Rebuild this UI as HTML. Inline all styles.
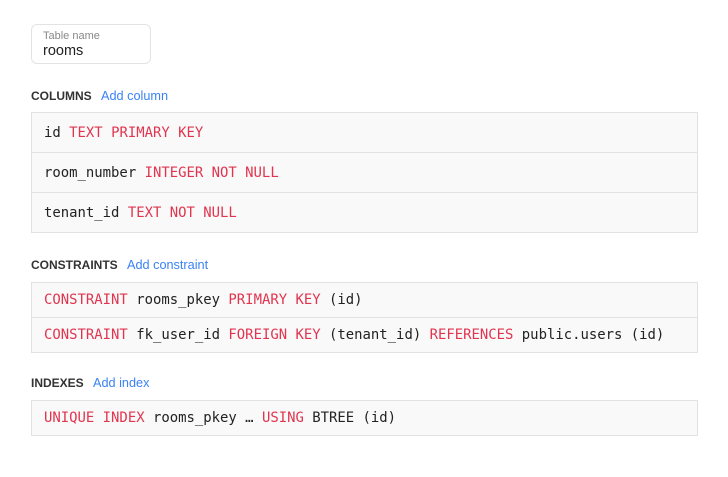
<!DOCTYPE html>
<html><head><style>
body{margin:0;background:#fff;width:728px;height:477px;font-family:"Liberation Sans",sans-serif;position:relative}
.tn{position:absolute;left:31px;top:24px;width:118px;height:38px;border:1px solid #e3e3e3;border-radius:6px;box-sizing:content-box}
.tn .l{position:absolute;left:11px;top:5px;font-size:11px;color:#888}
.tn .v{position:absolute;left:11px;top:18px;font-size:14.5px;color:#222}
.h{position:absolute;left:31px;font-size:12px;font-weight:bold;color:#333}
.h span{font-weight:normal;color:#3b82f6;margin-left:6px;font-size:12.7px}
.box{position:absolute;left:31px;width:665px;border:1px solid #e2e2e2;background:#f9f9f9}
.r{font-family:"DejaVu Sans Mono",monospace;font-size:13.93px;color:#222;padding-left:12px;border-top:1px solid #e2e2e2;white-space:pre}
.r:first-child{border-top:none}
.k{color:#e0344f}
</style></head><body>
<div class="tn"><div class="l">Table name</div><div class="v">rooms</div></div>
<div class="h" style="top:89px">COLUMNS <span>Add column</span></div>
<div class="box" style="top:112px">
<div class="r" style="height:39px;line-height:40px">id <span class="k">TEXT PRIMARY KEY</span></div>
<div class="r" style="height:39px;line-height:40px">room_number <span class="k">INTEGER NOT NULL</span></div>
<div class="r" style="height:39px;line-height:40px">tenant_id <span class="k">TEXT NOT NULL</span></div>
</div>
<div class="h" style="top:258px">CONSTRAINTS <span>Add constraint</span></div>
<div class="box" style="top:282px">
<div class="r" style="height:34px;line-height:34px"><span class="k">CONSTRAINT</span> rooms_pkey <span class="k">PRIMARY KEY</span> (id)</div>
<div class="r" style="height:34px;line-height:34px"><span class="k">CONSTRAINT</span> fk_user_id <span class="k">FOREIGN KEY</span> (tenant_id) <span class="k">REFERENCES</span> public.users (id)</div>
</div>
<div class="h" style="top:376px">INDEXES <span>Add index</span></div>
<div class="box" style="top:400px">
<div class="r" style="height:34px;line-height:34px"><span class="k">UNIQUE INDEX</span> rooms_pkey … <span class="k">USING</span> BTREE (id)</div>
</div>
</body></html>
